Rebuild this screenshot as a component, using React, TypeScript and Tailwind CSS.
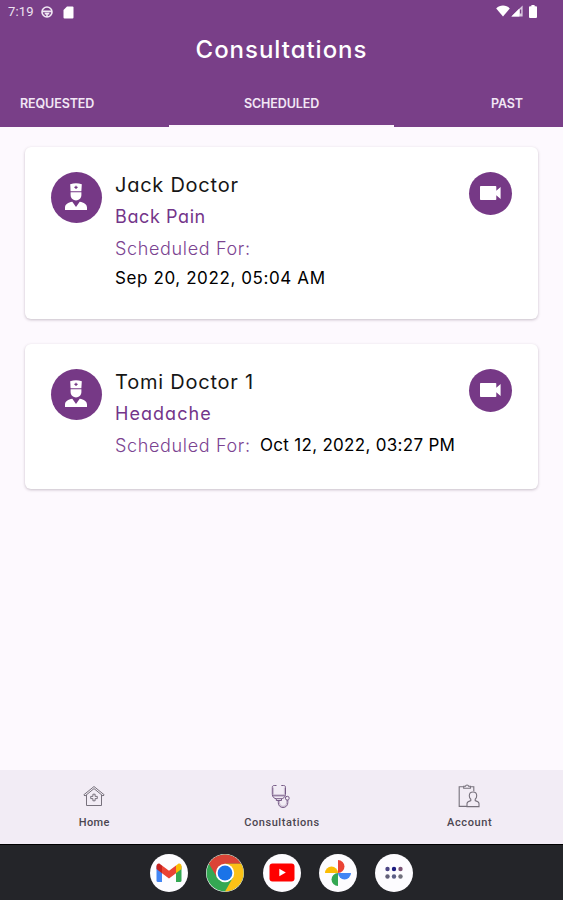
import React from 'react';

interface Consultation {
  id: number;
  doctor: string;
  reason: string;
  date: string;
  stacked: boolean;
}

const consultations: Consultation[] = [
  { id: 1, doctor: 'Jack Doctor', reason: 'Back Pain', date: 'Sep 20, 2022, 05:04 AM', stacked: true },
  { id: 2, doctor: 'Tomi Doctor 1', reason: 'Headache', date: 'Oct 12, 2022, 03:27 PM', stacked: false },
];

const StatusBar = () => (
  <div className="flex h-6 items-center justify-between pl-2 pr-[26px] text-white">
    <div className="flex items-center">
      <span className="w-[33px] font-[Roboto] text-[13px] leading-6 tracking-[0.2px] text-[#eee3f1]">7:19</span>
      <svg width="12" height="12" viewBox="0 0 12 12" fill="none" stroke="#f1e8f4" strokeWidth="1.6">
        <circle cx="6" cy="6" r="5" />
        <path d="M1 5.4h10M3.7 7.6h4.6M6 7.6V11" />
      </svg>
      <svg className="ml-[10px]" width="11" height="13" viewBox="0 0 11 13" fill="white">
        <path d="M4 0.5h5.5a1 1 0 0 1 1 1v10a1 1 0 0 1-1 1h-8a1 1 0 0 1-1-1V4z" />
      </svg>
    </div>
    <div className="-mt-0.5 flex items-center">
      <svg width="14" height="12" viewBox="0 0 14 12" fill="white">
        <path d="M7 11.5 0.2 3.4C2.2 1.5 4.4 0.6 7 0.6s4.8 0.9 6.8 2.8z" />
      </svg>
      <svg className="ml-px" width="12" height="12" viewBox="0 0 12 12">
        <path d="M11.6 0.4v11.2H0.4z" fill="#d9c8df" />
        <path d="M8.4 3.6v8H0.4z" fill="white" />
        <path d="M9.6 4.5v4" stroke="#793f88" strokeWidth="1.3" />
      </svg>
      <svg className="ml-[6px]" width="8" height="13" viewBox="0 0 8 13" fill="white">
        <path d="M2.4 0h3.2v1.3H7a1 1 0 0 1 1 1V12a1 1 0 0 1-1 1H1a1 1 0 0 1-1-1V2.3a1 1 0 0 1 1-1h1.4z" />
      </svg>
    </div>
  </div>
);

const DoctorAvatar = () => (
  <div className="mt-[25px] flex h-[51px] w-[51px] shrink-0 items-center justify-center rounded-full bg-[#763986]">
    <svg className="-mt-0.5 -ml-px" width="22" height="27" viewBox="0 0 22 27" fill="white">
      <path d="M5.2 1.2Q11-.6 16.800 1.200L16.400 8.300H5.600z" />
      <path d="M11 2.800v3.200M9.400 4.400h3.200" stroke="#763986" strokeWidth="1.200" />
      <path d="M5.600 9.200h10.800v2.800c0 3.400-2.700 5.400-5.400 5.400S5.600 15.400 5.600 12z" />
      <path d="M0 27v-2.500c0-3.300 3.200-5.100 7.300-5.800L11 24l3.700-5.300c4.100.7 7.300 2.500 7.300 5.800V27z" />
    </svg>
  </div>
);

const VideoButton = () => (
  <button className="mt-[25px] mr-[26px] flex h-[43px] w-[43px] shrink-0 items-center justify-center rounded-full bg-[#763986]">
    <svg className="-mt-px" width="21" height="14" viewBox="0 0 21 14" fill="white">
      <path d="M0.800 0h14.700a.8.8 0 0 1 .8.800v4L20.600 1v12l-4.300-3.800v4a.8.8 0 0 1-.8.800H0.800a.8.8 0 0 1-.8-.8V.800A.8.8 0 0 1 .8 0z" />
    </svg>
  </button>
);

const ConsultationCard = ({ item }: { item: Consultation }) => (
  <div
    className={`flex rounded-[6px] bg-white pl-[26px] shadow-[0_1px_3px_rgba(60,40,60,0.28)] ${
      item.stacked ? 'h-[172px]' : 'h-[145px]'
    }`}
  >
    <DoctorAvatar />
    <div className="min-w-0 flex-1 pl-[13px] pt-[22px] whitespace-nowrap">
      <h2 className={`text-[20px] leading-8 text-[#161616] ${item.stacked ? 'tracking-[0.75px]' : 'tracking-[0.78px]'}`}>
        {item.doctor}
      </h2>
      <p className={`text-[18px] leading-8 text-[#74358a] ${item.stacked ? 'tracking-[0.6px]' : 'tracking-[1.05px]'}`}>
        {item.reason}
      </p>
      <div className={item.stacked ? '' : 'flex'}>
        <p className="w-[145px] text-[18px] font-light leading-8 tracking-[0.65px] text-[#7b4391]">Scheduled For:</p>
        <p className={`text-[17px] text-black ${item.stacked ? 'leading-[27px] tracking-[0.6px]' : 'leading-[31px] tracking-[0.3px]'}`}>
          {item.date}
        </p>
      </div>
    </div>
    <VideoButton />
  </div>
);

const HomeIcon = () => (
  <svg width="22" height="22" viewBox="0 0 22 22" fill="none" stroke="#77717c" strokeWidth="1">
    <path d="M0.800 9.800 11 1.500l10.200 8.300-1.200 1.200L11 3.600 2 11z" />
    <path d="M3.500 10v10.500h15V10" />
    <path d="M9.900 9.200h2.200v2.200h2.200v2.200h-2.200v2.200H9.900v-2.200H7.700v-2.200h2.200z" />
  </svg>
);

const StethoscopeIcon = () => (
  <svg width="20" height="25" viewBox="0 0 20 25" fill="none" stroke="#755985" strokeWidth="1">
    <path d="M5.500 1.500H3.200C1.800 1.500 1.300 2.300 1.300 3.300v7c0 2.700 2 4.400 4.200 4.400h4.700c2.200 0 4.300-1.700 4.300-4.400v-7c0-1-.5-1.800-1.900-1.800h-2.300" />
    <path d="M2.400 3.500v7.300h11V3.500" opacity=".35" />
    <path d="M2 11.800h11.800M5.300 14.700v1.800h5.200v-1.800" />
    <path d="M7.300 16.500v2.300c0 2.700 2 4.700 4.700 4.700s4.800-2 4.800-4.700V16" />
    <path d="M8.500 16.500v2.300c0 2 1.500 3.500 3.500 3.500s3.600-1.500 3.600-3.500V16" opacity=".4" />
    <circle cx="16.300" cy="14.200" r="1.900" />
  </svg>
);

const AccountIcon = () => (
  <svg width="22" height="24" viewBox="0 0 22 24" fill="none" stroke="#77717c" strokeWidth="1.100">
    <path d="M9 22.400H1.200V2.800h4.500M12.300 2.800h3.500v4.500" />
    <path d="M5.700 4.200V2.200h1.800C7.800 0.500 10.300 0.500 10.600 2.200h1.800v2z" />
    <path d="M9 22.600v-3c0-1.600 1.500-2.400 3.800-3v-1.300c-1-.8-1.500-2-1.500-3.600 0-2.300 1.600-3.700 3.700-3.700s3.700 1.400 3.700 3.700c0 1.600-.5 2.800-1.500 3.600v1.300c2.300.6 3.800 1.400 3.800 3v3z" />
  </svg>
);

const navItems = [
  { label: 'Home', icon: <HomeIcon />, spacing: 'tracking-[0.4px]' },
  { label: 'Consultations', icon: <StethoscopeIcon />, spacing: 'tracking-[0.55px]' },
  { label: 'Account', icon: <AccountIcon />, spacing: 'tracking-[0.6px]' },
];

const BottomNav = () => (
  <nav className="grid h-[74px] shrink-0 grid-cols-3 bg-[#f2ecf5]">
    {navItems.map(item => (
      <div key={item.label} className="flex flex-col items-center pt-[13px]">
        <div className="flex h-[26px] items-center justify-center">{item.icon}</div>
        <span className={`mt-1.5 pl-px font-[Roboto] text-[11px] font-medium leading-4 text-[#4c4650] ${item.spacing}`}>
          {item.label}
        </span>
      </div>
    ))}
  </nav>
);

const GmailIcon = () => (
  <svg width="26" height="20" viewBox="0 0 26 20">
    <path d="M0.500 3v14.500a1.500 1.500 0 0 0 1.500 1.500h4V6.500z" fill="#4285f4" />
    <path d="M25.500 3v14.500a1.500 1.500 0 0 1-1.500 1.500h-4V6.500z" fill="#34a853" />
    <path d="M20 2.500 22 1c1.500-1 3.500 0 3.500 2v3l-5.500 4.200z" fill="#fbbc04" />
    <path d="M6 2.500 4 1C2.500 0 0.500 1 0.500 3v3L6 10.200z" fill="#c5221f" />
    <path d="M6 2.500 13 7.800l7-5.300v7.700l-7 5.300-7-5.300z" fill="#ea4335" />
  </svg>
);

const ChromeIcon = () => (
  <svg width="38" height="38" viewBox="0 0 38 38">
    <circle cx="19" cy="19" r="18.500" fill="#34a853" />
    <path d="M2.980 9.750A18.500 18.500 0 0 1 35.020 9.750H19L11 23.600z" fill="#db4437" />
    <path d="M35.020 9.750A18.500 18.500 0 0 1 19 37.500L27 23.600 19 9.750z" fill="#fbc116" />
    <circle cx="19" cy="19" r="9.200" fill="white" />
    <circle cx="19" cy="19" r="7.400" fill="#1a73e8" />
  </svg>
);

const YoutubeIcon = () => (
  <svg width="26" height="19" viewBox="0 0 26 19">
    <rect x="0.500" y="0.500" width="25" height="18" rx="3" fill="#ff0000" />
    <path d="M10.300 5.800v7.400l6.500-3.700z" fill="white" />
  </svg>
);

const PhotosIcon = () => (
  <svg width="28" height="28" viewBox="0 0 28 28">
    <path d="M14 1a6.500 6.500 0 0 1 0 13z" fill="#ea4335" />
    <path d="M27 14a6.500 6.500 0 0 1-13 0z" fill="#4285f4" />
    <path d="M14 27a6.500 6.500 0 0 1 0-13z" fill="#34a853" />
    <path d="M1 14a6.500 6.500 0 0 1 13 0z" fill="#fbbc04" />
  </svg>
);

const AppsIcon = () => (
  <svg width="18" height="14" viewBox="0 0 18 14">
    <circle cx="2.500" cy="3" r="2.200" fill="#4b4585" />
    <circle cx="9" cy="3" r="2.200" fill="#1c1c80" />
    <circle cx="15.500" cy="3" r="2.200" fill="#7b5375" />
    <circle cx="2.500" cy="10.500" r="2.200" fill="#626079" />
    <circle cx="9" cy="10.500" r="2.200" fill="#5c5f86" />
    <circle cx="15.500" cy="10.500" r="2.200" fill="#70707c" />
  </svg>
);

const dockIcons = [<GmailIcon />, <ChromeIcon />, <YoutubeIcon />, <PhotosIcon />, <AppsIcon />];

const Dock = () => (
  <div className="flex h-14 shrink-0 items-center justify-center gap-[18.3px] border-t border-black bg-[#242529]">
    {dockIcons.map((icon, i) => (
      <div key={i} className="flex h-[38px] w-[38px] items-center justify-center rounded-full bg-[#fdfcff]">
        {icon}
      </div>
    ))}
  </div>
);

export default function App() {
  return (
    <div className="flex h-[900px] w-[563px] flex-col overflow-hidden bg-[#fdf9fe] font-[Inter,sans-serif] [font-feature-settings:'cv11']">
      <header className="flex h-[127px] shrink-0 flex-col bg-[#793f88] text-white">
        <StatusBar />
        <h1 className="h-[52px] text-center text-[24px] font-medium leading-[51px] tracking-[0.98px]">Consultations</h1>
        <div className="flex h-[51px] text-[12.5px] font-semibold leading-[55px] text-[#f2e7f5]">
          <div className="h-[51px] w-[169px] pl-5 tracking-[-0.1px]">REQUESTED</div>
          <div className="h-[51px] w-[225px] border-b-2 border-[#fbf5fc] text-center tracking-[-0.1px]">SCHEDULED</div>
          <div className="h-[51px] flex-1 pr-10 text-right tracking-[-0.1px]">PAST</div>
        </div>
      </header>
      <main className="flex flex-1 flex-col gap-[25px] px-[25px] pt-5">
        {consultations.map(item => (
          <ConsultationCard key={item.id} item={item} />
        ))}
      </main>
      <BottomNav />
      <Dock />
    </div>
  );
}
